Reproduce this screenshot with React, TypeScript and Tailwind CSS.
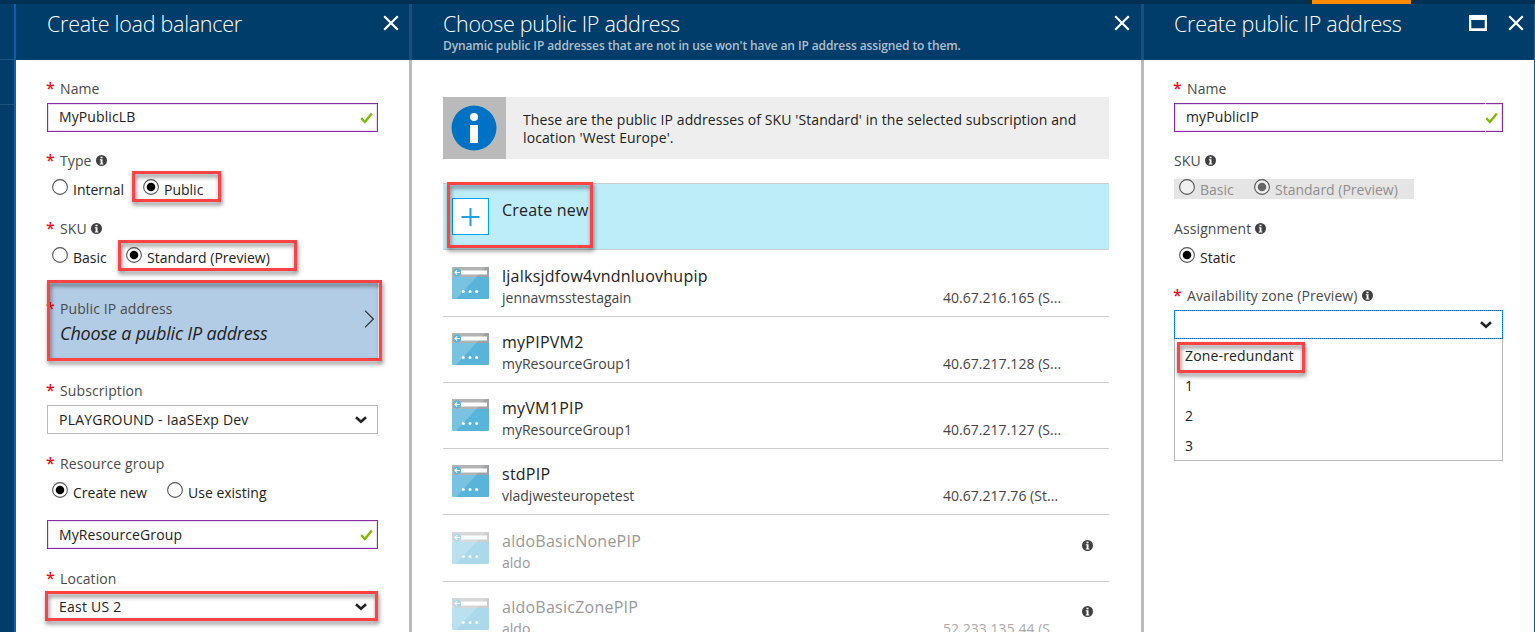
import React from "react";

type Kids = { children?: React.ReactNode };

const InfoIcon = ({ className = "" }: { className?: string }) => (
  <svg viewBox="0 0 11 11" className={`h-[11px] w-[11px] shrink-0 ${className}`}>
    <circle cx="5.5" cy="5.5" r="5.5" fill="#404040" />
    <rect x="4.5" y="1.7" width="2" height="1.6" fill="#fff" />
    <path d="M3.8 4.3h2.7v4.3h.8v.9H3.8v-.9h.8V5.2h-.8z" fill="#fff" />
  </svg>
);

const Check = () => (
  <svg viewBox="0 0 13 12" className="h-3 w-[13px] shrink-0">
    <path d="M1.2 6.2 4.9 10 11.8 1.6" fill="none" stroke="#7fba00" strokeWidth="2.4" />
  </svg>
);

const Chevron = () => (
  <svg viewBox="0 0 12 8" className="h-2 w-3 shrink-0">
    <path d="M1 1.3 6 5.8 11 1.3" fill="none" stroke="#222" strokeWidth="2.6" />
  </svg>
);

const Close = () => (
  <svg viewBox="0 0 16 16" className="h-4 w-4 shrink-0">
    <path d="M1.2 1.2 14.8 14.8M14.8 1.2 1.2 14.8" stroke="#fff" strokeWidth="2.2" />
  </svg>
);

const Maximize = () => (
  <svg viewBox="0 0 18 16" className="h-4 w-[18px] shrink-0">
    <path d="M0 0h18v16H0zM2.3 5v8.3h13.4V5z" fill="#fff" fillRule="evenodd" />
  </svg>
);

const IpIcon = ({ faded }: { faded?: boolean }) => (
  <svg viewBox="0 0 37 32" className={`h-8 w-[37px] shrink-0 ${faded ? "opacity-50" : ""}`}>
    <rect width="37" height="32" rx="1" fill="#59b4d9" />
    <path d="M0 10V1a1 1 0 0 1 1-1h35a1 1 0 0 1 1 1v9z" fill="#a0a1a2" />
    <path d="M1 0h32.500L4 32H1a1 1 0 0 1-1-1V1a1 1 0 0 1 1-1z" fill="#fff" opacity=".2" />
    <rect x="9" y="3.500" width="26" height="4" fill="#fff" />
    <circle cx="5" cy="5.500" r="4" fill="#59b4d9" />
    <path d="M8 5.500H2.800M5 3.300 2.800 5.500 5 7.700" fill="none" stroke="#fff" strokeWidth="1.100" />
    <circle cx="11.300" cy="24.500" r="1.500" fill="#fff" />
    <circle cx="18" cy="24.500" r="1.500" fill="#fff" />
    <circle cx="24.700" cy="24.500" r="1.500" fill="#fff" />
  </svg>
);

const Highlight = ({ className }: { className: string }) => (
  <div
    className={`pointer-events-none absolute z-10 border-[3px] border-[#fd4343] drop-shadow-[1px_3px_2px_rgba(0,0,0,0.5)] ${className}`}
  />
);

const Star = () => (
  <span className="-mt-[2px] -ml-px w-[14px] shrink-0 text-[16px] leading-[20px] font-semibold text-[#e81123]">*</span>
);

const Label = ({ children, required, info, className = "" }: Kids & { required?: boolean; info?: boolean; className?: string }) => (
  <div className={`flex h-[22px] items-center text-[14px] tracking-[0.1px] text-[#4a4a4a] ${className}`}>
    {required && <Star />}
    <span>{children}</span>
    {info && <InfoIcon className="-mt-px ml-1" />}
  </div>
);

const Radio = ({ children, checked, disabled, className = "" }: Kids & { checked?: boolean; disabled?: boolean; className?: string }) => (
  <div className={`flex items-center ${disabled ? "text-[#8f8f8f]" : "text-[#222]"} ${className}`}>
    <svg viewBox="0 0 16 16" className="-mt-[4px] mr-[5px] h-4 w-4 shrink-0">
      <circle cx="8" cy="8" r="7.400" fill={disabled ? "#f0f0f0" : "#fff"} stroke="#555" strokeWidth="1.100" />
      {checked && <circle cx="8" cy="8" r="4.300" fill={disabled ? "#666" : "#000"} />}
    </svg>
    <span className="pt-[2px]">{children}</span>
  </div>
);

const TextField = ({ value, className = "" }: { value: string; className?: string }) => (
  <div className={`flex h-[29px] items-center justify-between border border-[#8a2da5] pr-1 pl-[11px] text-[#222] shadow-[inset_0_0_0_1px_#eadcf0] ${className}`}>
    <span className="-mt-px tracking-[0.1px]">{value}</span>
    <Check />
  </div>
);

const Select = ({ value, className = "" }: { value: string; className?: string }) => (
  <div className={`flex h-[29px] items-center justify-between border border-[#bababa] pr-[10px] pl-[11px] text-[#222] ${className}`}>
    <span className="pt-px tracking-[0.22px]">{value}</span>
    <Chevron />
  </div>
);

const Divider = () => (
  <div className="flex w-[3px] shrink-0 flex-col">
    <div className="h-14 bg-[#1c4f7c]" />
    <div className="flex-1 bg-[#bababa]" />
  </div>
);

const Header = ({ title, subtitle, children, className = "" }: Kids & { title: string; subtitle?: string; className?: string }) => (
  <header className={`flex h-14 shrink-0 justify-between bg-[#003d6b] text-white ${className}`}>
    <div className="flex flex-col pt-[5px]">
      <h1 className="text-[21.500px] leading-[30px] font-light tracking-[-0.27px] whitespace-nowrap">{title}</h1>
      {subtitle && <p className="text-[12px] leading-[14px] font-semibold tracking-[-0.11px] whitespace-nowrap text-[#b0bfcc]">{subtitle}</p>}
    </div>
    <div className="flex gap-[21px] pt-[11px]">{children}</div>
  </header>
);

const addresses = [
  { name: "ljalksjdfow4vndnluovhupip", group: "jennavmsstestagain", ip: "40.67.216.165 (S..." },
  { name: "myPIPVM2", group: "myResourceGroup1", ip: "40.67.217.128 (S..." },
  { name: "myVM1PIP", group: "myResourceGroup1", ip: "40.67.217.127 (S..." },
  { name: "stdPIP", group: "vladjwesteuropetest", ip: "40.67.217.76 (St..." },
  { name: "aldoBasicNonePIP", group: "aldo", ip: "", faded: true, tall: true },
  { name: "aldoBasicZonePIP", group: "aldo", ip: "52.233.135.44 (S...", faded: true },
];

export default function App() {
  return (
    <div className="flex h-[632px] w-[1535px] flex-col overflow-hidden bg-white font-['Open_Sans','Noto_Sans',sans-serif] text-[14px] leading-[18px]">
      <div className="flex h-1 shrink-0 bg-[#003054]">
        <div className="ml-[1312px] w-[99px] bg-[#ff8c00]" />
      </div>
      <div className="flex min-h-0 flex-1">
        <div className="flex w-[14px] shrink-0 flex-col bg-[#003d6b]">
          <div className="h-14 border-b border-[#1f527c]" />
          <div className="h-[45px] border-b border-[#1f527c]" />
        </div>
        <div className="w-[2px] shrink-0 bg-[#0063b5]" />

        <section className="flex w-[393px] shrink-0 flex-col">
          <Header title="Create load balancer" className="pr-[10px] pl-[31px]"><Close /></Header>
          <div className="flex flex-col pt-[18px] pr-[31px] pl-[31px]">
            <Label required>Name</Label>
            <TextField value="MyPublicLB" className="mt-[3px]" />
            <Label required info className="mt-[18px]">Type</Label>
            <div className="mt-[6px] flex h-[22px] items-center pl-[5px]">
              <Radio className="w-[91px]">Internal</Radio>
              <div className="relative">
                <Radio checked>Public</Radio>
                <Highlight className="-top-[8px] -left-[11px] h-[31px] w-[89px]" />
              </div>
            </div>
            <Label required info className="mt-[18px]">SKU</Label>
            <div className="mt-[6px] flex h-[22px] items-center pl-[5px]">
              <Radio className="w-[74px]">Basic</Radio>
              <div className="relative">
                <Radio checked>Standard (Preview)</Radio>
                <Highlight className="-top-[7px] -left-[8px] h-[31px] w-[179px]" />
              </div>
            </div>
            <div className="relative mt-[12px] flex h-[81px] items-center justify-between bg-[#b3cce6] pr-1">
              <div className="pt-[2px]">
                <Label required>Public IP address</Label>
                <div className="pl-[13px] text-[18px] leading-[26px] tracking-[-0.2px] text-[#222] italic">Choose a public IP address</div>
              </div>
              <svg viewBox="0 0 10 18" className="-mt-[3px] h-[18px] w-[10px]">
                <path d="M1 .7 9.300 9 1 17.300" fill="none" stroke="#333" strokeWidth="1.200" />
              </svg>
              <Highlight className="top-0 left-0 h-[81px] w-[335px]" />
            </div>
            <Label required className="mt-[19px]">Subscription</Label>
            <Select value="PLAYGROUND - IaaSExp Dev" className="mt-[3px]" />
            <Label required className="mt-[19px]">Resource group</Label>
            <div className="mt-[6px] flex h-[22px] items-center pl-[5px]">
              <Radio checked className="w-[115px]">Create new</Radio>
              <Radio>Use existing</Radio>
            </div>
            <TextField value="MyResourceGroup" className="mt-[17px] pt-px" />
            <Label required className="mt-[19px]">Location</Label>
            <div className="relative mt-[2px]">
              <Select value="East US 2" />
              <Highlight className="-top-px -left-[2px] h-[30px] w-[333px]" />
            </div>
          </div>
        </section>

        <Divider />

        <section className="flex w-[729px] shrink-0 flex-col">
          <Header
            title="Choose public IP address"
            subtitle="Dynamic public IP addresses that are not in use won't have an IP address assigned to them."
            className="pr-[11px] pl-[31px]"
          >
            <Close />
          </Header>
          <div className="flex flex-col pt-[37px] pr-[32px] pl-[31px]">
            <div className="flex h-[62px] bg-[#eee]">
              <div className="flex w-[63px] items-center justify-center bg-[#bababa]">
                <svg viewBox="0 0 46 46" className="-ml-px h-[46px] w-[46px]">
                  <circle cx="23" cy="23" r="22.500" fill="#0072c6" />
                  <circle cx="23" cy="12" r="4" fill="#fff" />
                  <rect x="19" y="20" width="8" height="18" fill="#fff" />
                </svg>
              </div>
              <p className="pt-[14px] pl-[17px] tracking-[0.095px] whitespace-nowrap text-[#222]">
                These are the public IP addresses of SKU 'Standard' in the selected subscription and
                <br />
                location 'West Europe'.
              </p>
            </div>

            <div className="relative mt-6 flex h-[67px] border-y border-[#ccc] bg-[#bdedf9] pl-[9px]">
              <svg viewBox="0 0 37 37" className="mt-[14px] h-[37px] w-[37px]">
                <rect x=".5" y=".5" width="36" height="36" fill="#fff" stroke="#00a1f1" />
                <path d="M18.500 10v18M9.500 19h18" stroke="#1ba1e2" strokeWidth="2" />
              </svg>
              <span className="mt-[15px] ml-[13px] text-[16px] leading-[22px] tracking-[0.2px] text-[#222]">Create new</span>
              <Highlight className="-top-[2px] left-[4px] h-[66px] w-[146px]" />
            </div>

            {addresses.map((a, i) => (
              <div
                key={a.name}
                className={`flex shrink-0 border-b border-[#ccc] pl-[9px] ${i === 0 || a.tall ? "h-[67px] pt-[17px]" : "h-[66px] pt-4"}`}
              >
                <IpIcon faded={a.faded} />
                <div className={`-mt-[2px] ml-[13px] w-[441px] ${a.faded ? "text-[#999]" : "text-[#222]"}`}>
                  <div className="text-[16px] leading-[22px] tracking-[0.25px]">{a.name}</div>
                  <div className={a.faded ? "leading-[22px]" : "leading-[22px] text-[#444]"}>{a.group}</div>
                </div>
                <div className={`mt-5 w-[139px] leading-[22px] tracking-[0.03px] ${a.faded ? "text-[#aaa]" : "text-[#444]"}`}>{a.ip}</div>
                {a.faded && <InfoIcon className="mt-[8px]" />}
              </div>
            ))}
          </div>
        </section>

        <Divider />

        <section className="flex w-[390px] shrink-0 flex-col">
          <Header title="Create public IP address" className="pr-[10px] pl-[30px]">
            <Maximize />
            <Close />
          </Header>
          <div className="flex flex-col pt-[18px] pr-[31px] pl-[30px]">
            <Label required>Name</Label>
            <div className="relative mt-[3px]">
              <TextField value="myPublicIP" />
              <div className="absolute top-0 right-[17px] h-full w-px bg-white" />
            </div>
            <Label info className="mt-[18px]">SKU</Label>
            <div className="mt-[7px] flex h-5 w-[240px] items-center bg-[#e5e5e5] pl-[5px]">
              <Radio disabled className="w-[75px]">Basic</Radio>
              <Radio disabled checked>Standard (Preview)</Radio>
            </div>
            <Label info className="mt-[19px]">Assignment</Label>
            <div className="mt-[6px] flex h-[22px] items-center pl-[5px]">
              <Radio checked>Static</Radio>
            </div>
            <Label required info className="mt-[17px]">Availability zone (Preview)</Label>
            <div className="mt-[3px] flex h-[29px] items-center justify-end border border-[#00bcf2] pr-[10px] outline-1 outline-offset-[-1px] outline-[#0063b1] outline-dotted">
              <Chevron />
            </div>
            <div className="relative flex h-[122px] flex-col border border-t-0 border-[#bababa] pt-[2px] pl-[10px] tracking-[0.15px] text-[#222]">
              {["Zone-redundant", "1", "2", "3"].map((z) => (
                <div key={z} className="h-[30px] leading-[30px]">{z}</div>
              ))}
              <Highlight className="top-[3px] left-[2px] h-[31px] w-[128px]" />
            </div>
          </div>
        </section>
        <div className="w-px shrink-0 bg-[#0063b5]" />
      </div>
    </div>
  );
}
